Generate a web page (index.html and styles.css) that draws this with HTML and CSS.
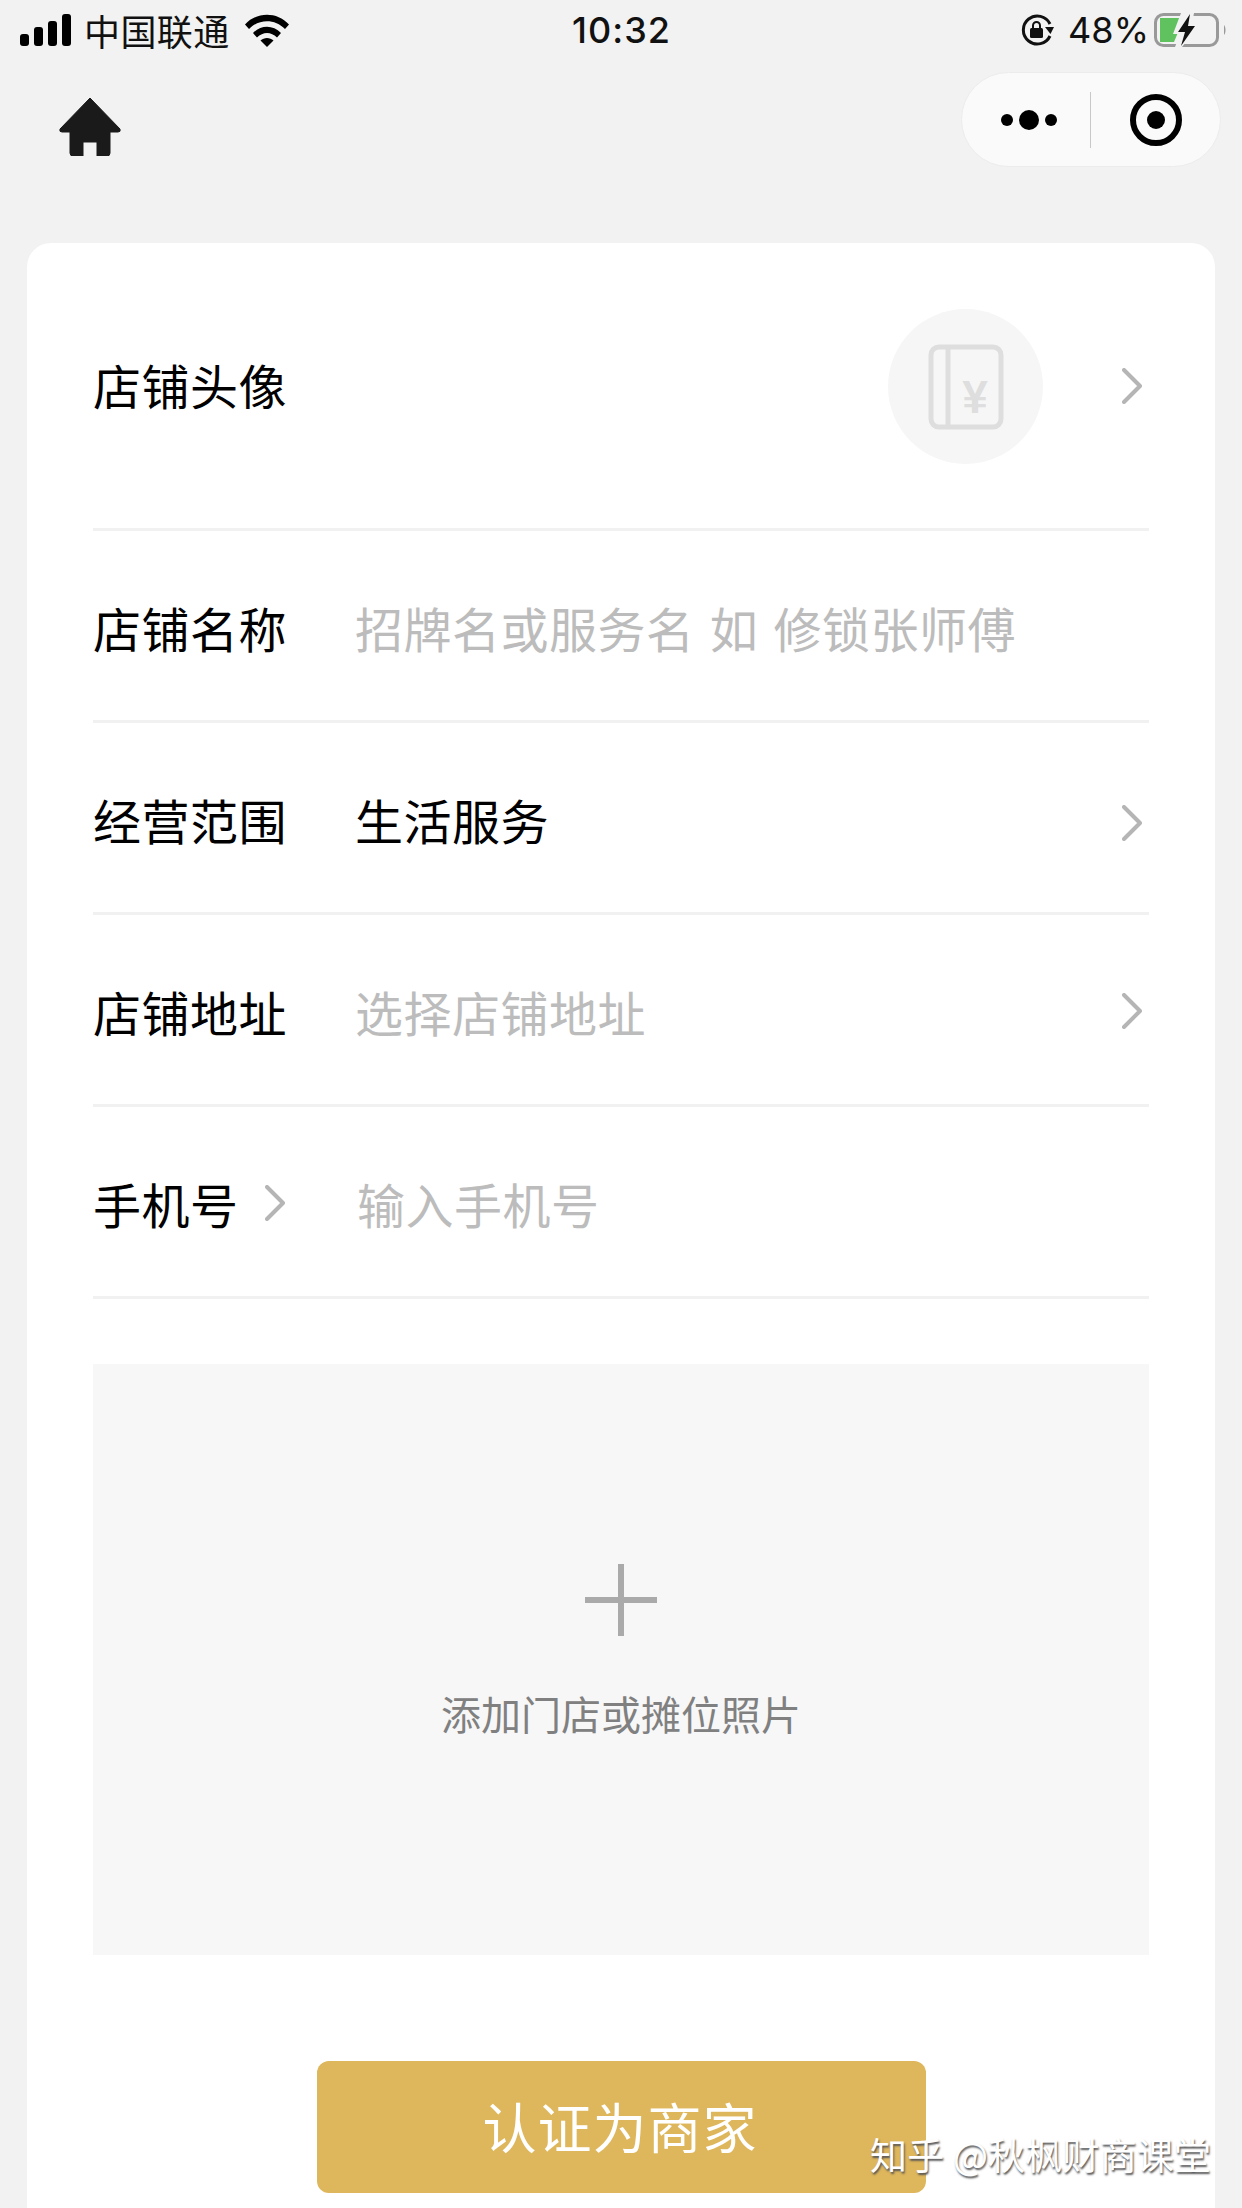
FILE: index.html
```html
<!DOCTYPE html>
<html lang="zh-CN">
<head>
    <meta charset="UTF-8">
    <meta name="viewport" content="width=device-width, initial-scale=1.0">
    <title>认证为商家</title>
    <link rel="stylesheet" href="styles.css">
</head>
<body>
    <div class="page">
        <div class="status-bar">
            <div class="status-left">
                <svg class="signal" width="51" height="32" viewBox="0 0 51 32">
                    <rect x="0" y="20" width="9" height="12" rx="3"/>
                    <rect x="14" y="13" width="9" height="19" rx="3"/>
                    <rect x="28" y="7" width="9" height="25" rx="3"/>
                    <rect x="42" y="0" width="9" height="32" rx="3"/>
                </svg>
                <span class="carrier">中国联通</span>
                <svg class="wifi" width="46" height="34" viewBox="0 0 46 34">
                    <path d="M1 11.500C13 -1.500 33 -1.500 45 11.500L41 16C31 5.500 15 5.500 5 16Z"/>
                    <path d="M9 20C17 11.500 29 11.500 37 20L33 24.500C27 18.500 19 18.500 13 24.500Z"/>
                    <path d="M16.500 27.500C20 24 26 24 29.500 27.500L23 34Z"/>
                </svg>
            </div>
            <div class="status-time">10:32</div>
            <div class="status-right">
                <svg class="rotation-lock" width="34" height="32" viewBox="0 0 34 32">
                    <path d="M29 22A14 14 0 1 1 29 10" fill="none" stroke="#111" stroke-width="3"/>
                    <path d="M24 13L33 13L29.500 20Z" fill="#111"/>
                    <rect x="9" y="14" width="13" height="10" rx="1.500" fill="#111"/>
                    <path d="M12 14V11.500A3.500 3.500 0 0 1 19 11.500V14" fill="none" stroke="#111" stroke-width="2"/>
                </svg>
                <span class="battery-text">48%</span>
                <svg class="battery" width="72" height="34" viewBox="0 0 72 34">
                    <rect x="1.500" y="1.500" width="62" height="31" rx="8" fill="none" stroke="#999" stroke-width="3"/>
                    <path d="M70 12C72 14 72 20 70 22Z" fill="#999"/>
                    <path d="M6 5H30L20 29H6Z" fill="#5fc25f"/>
                    <path d="M27 0L40 0L38 11L46 11L28 34L21 34L26 21L19 21Z" fill="#f2f2f2"/>
                    <path d="M36 1L24 19H31L27 33L41 13H34Z" fill="#111"/>
                </svg>
            </div>
        </div>

        <div class="nav-bar">
            <svg class="home-icon" width="62" height="58" viewBox="0 0 62 58">
                <path d="M31 0L61 31Q62 34 59 34H51V55Q51 58 48 58H38V44H24V58H14Q11 58 11 55V34H3Q0 34 1 31Z" fill="#1a1a1a" stroke="#1a1a1a" stroke-linejoin="round"/>
            </svg>
            <div class="capsule">
                <div class="capsule-more">
                    <span class="dot"></span>
                    <span class="dot dot-big"></span>
                    <span class="dot"></span>
                </div>
                <div class="capsule-line"></div>
                <div class="capsule-target">
                    <span class="target-dot"></span>
                </div>
            </div>
        </div>

        <div class="card">
            <div class="row row-avatar">
                <span class="row-label">店铺头像</span>
                <div class="avatar">
                    <svg width="76" height="86" viewBox="0 0 76 86">
                        <rect x="3" y="3" width="70" height="80" rx="8" fill="none" stroke="#dedede" stroke-width="5"/>
                        <path d="M20 3V83" stroke="#dedede" stroke-width="5"/>
                        <text x="47" y="69" class="yen">¥</text>
                    </svg>
                </div>
                <svg class="chevron" width="20" height="36" viewBox="0 0 20 36"><path d="M2 2L18 18L2 34"/></svg>
            </div>
            <div class="row">
                <span class="row-label">店铺名称</span>
                <span class="row-value placeholder">招牌名或服务名 如 修锁张师傅</span>
            </div>
            <div class="row">
                <span class="row-label">经营范围</span>
                <span class="row-value">生活服务</span>
                <svg class="chevron chevron-low" width="20" height="36" viewBox="0 0 20 36"><path d="M2 2L18 18L2 34"/></svg>
            </div>
            <div class="row">
                <span class="row-label">店铺地址</span>
                <span class="row-value placeholder">选择店铺地址</span>
                <svg class="chevron" width="20" height="36" viewBox="0 0 20 36"><path d="M2 2L18 18L2 34"/></svg>
            </div>
            <div class="row">
                <span class="row-label row-label-phone">手机号
                    <svg class="chevron" width="20" height="36" viewBox="0 0 20 36"><path d="M2 2L18 18L2 34"/></svg>
                </span>
                <span class="row-value placeholder phone-value">输入手机号</span>
            </div>

            <div class="photo-box">
                <div class="plus"></div>
                <div class="photo-text">添加门店或摊位照片</div>
            </div>

            <button class="submit-btn" type="button">认证为商家</button>
        </div>

        <div class="watermark">知乎 @秋枫财商课堂</div>
    </div>
</body>
</html>
```

FILE: styles.css
```css
* {
    box-sizing: border-box;
}
body {
    margin: 0;
    background: #f2f2f2;
    color: #000;
    font-family: "Noto Sans CJK SC", "Noto Sans", sans-serif;
}
.page {
    position: relative;
    width: 1242px;
    height: 2208px;
    overflow: hidden;
}
.status-bar {
    display: grid;
    grid-template-columns: 1fr auto 1fr;
    align-items: center;
    height: 60px;
    padding: 0 16px 0 20px;
}
.status-left {
    display: flex;
    align-items: center;
}
.carrier {
    margin-left: 13px;
    font-size: 36px;
    line-height: 60px;
    letter-spacing: 0.4px;
    color: #111;
}
.wifi {
    margin-left: 14px;
}
.status-time {
    margin-left: -3px;
    font-family: Inter, "Liberation Sans", sans-serif;
    font-size: 36px;
    font-weight: 500;
    letter-spacing: 1px;
    color: #111;
}
.status-right {
    display: flex;
    align-items: center;
    justify-content: flex-end;
}
.battery-text {
    margin-left: 13px;
    margin-right: 5px;
    font-family: Inter, "Liberation Sans", sans-serif;
    font-size: 36px;
    color: #111;
}
.nav-bar {
    display: flex;
    justify-content: space-between;
    align-items: flex-start;
    height: 183px;
    padding: 12px 21px 0 59px;
}
.home-icon {
    margin-top: 26px;
}
.capsule {
    display: flex;
    align-items: center;
    width: 260px;
    height: 95px;
    background: #fafafa;
    border: 1px solid #ececec;
    border-radius: 48px;
}
.capsule-more {
    display: flex;
    align-items: center;
    gap: 6px;
    margin-left: 39px;
    width: 89px;
}
.dot {
    width: 12px;
    height: 12px;
    border-radius: 50%;
    background: #000;
}
.dot-big {
    width: 20px;
    height: 20px;
}
.capsule-line {
    width: 1px;
    height: 56px;
    background: #c8c8c8;
}
.capsule-target {
    display: flex;
    align-items: center;
    justify-content: center;
    width: 52px;
    height: 52px;
    margin-left: 39px;
    border: 6px solid #000;
    border-radius: 50%;
}
.target-dot {
    width: 18px;
    height: 18px;
    border-radius: 50%;
    background: #000;
}
.card {
    display: flex;
    flex-direction: column;
    height: 2000px;
    margin: 0 27px;
    padding: 0 66px;
    background: #fff;
    border-radius: 24px;
}
.row {
    display: flex;
    align-items: center;
    height: 192px;
    padding-top: 3px;
    padding-right: 7px;
    border-bottom: 3px solid #f1f1f1;
}
.row-avatar {
    height: 288px;
    padding-top: 0;
}
.row-label {
    display: flex;
    align-items: center;
    width: 262px;
    flex-shrink: 0;
    font-size: 48px;
    line-height: 68px;
    letter-spacing: 0.5px;
}
.row-avatar .row-label {
    margin-top: -4px;
}
.row-label-phone .chevron {
    margin-left: 26px;
}
.row-value {
    flex: 1;
    font-size: 48px;
    line-height: 68px;
    letter-spacing: 0.5px;
    word-spacing: 4px;
}
.placeholder {
    color: #bcbcbc;
}
.phone-value {
    margin-left: 2px;
}
.chevron {
    flex-shrink: 0;
    fill: none;
    stroke: #b5b5b5;
    stroke-width: 4;
    stroke-linecap: round;
    stroke-linejoin: round;
}
.chevron-low {
    margin-top: 8px;
}
.avatar {
    display: flex;
    align-items: center;
    justify-content: center;
    width: 155px;
    height: 155px;
    margin-top: 2px;
    margin-left: auto;
    margin-right: 79px;
    border-radius: 50%;
    background: #f6f6f6;
}
.yen {
    font-family: "Liberation Sans", sans-serif;
    font-size: 46px;
    font-weight: 700;
    text-anchor: middle;
    fill: #dedede;
}
.photo-box {
    display: flex;
    flex-direction: column;
    align-items: center;
    height: 591px;
    margin-top: 65px;
    padding-top: 200px;
    background: #f7f7f7;
}
.plus {
    width: 72px;
    height: 72px;
    background:
        linear-gradient(#aaa, #aaa) center / 72px 6px no-repeat,
        linear-gradient(#aaa, #aaa) center / 6px 72px no-repeat;
}
.photo-text {
    margin-top: 49px;
    font-size: 40px;
    line-height: 56px;
    color: #808080;
}
.submit-btn {
    align-self: center;
    width: 609px;
    height: 132px;
    margin-top: 106px;
    padding: 0 2px 4px 0;
    border: none;
    border-radius: 12px;
    background: #deb65b;
    color: #fff;
    font-family: inherit;
    font-size: 54px;
    letter-spacing: 1px;
}
.watermark {
    position: absolute;
    left: 870px;
    top: 2129px;
    font-size: 37px;
    line-height: 50px;
    letter-spacing: 0.2px;
    white-space: nowrap;
    color: #fff;
    text-shadow: 1px 2px 2px #555;
}
```
